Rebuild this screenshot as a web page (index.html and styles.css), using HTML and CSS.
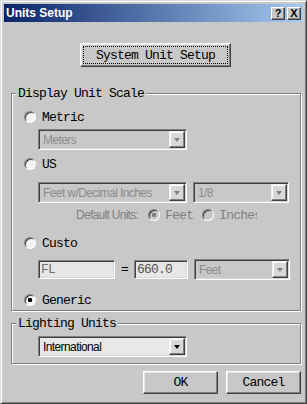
FILE: index.html
```html
<!DOCTYPE html>
<html>
<head>
    <title>Units Setup</title>
    <link rel="stylesheet" href="styles.css">
</head>
<body>
    <!-- dialog window -->
    <div class="window">
        <div class="titlebar">
            <span class="title">Units Setup</span>
            <span class="cap-btn help">?</span>
            <span class="cap-btn close">X</span>
        </div>

        <div class="client">
            <div class="top-row">
                <div class="btn btn-default"><span class="focus">System Unit Setup</span></div>
            </div>

            <!-- display unit scale -->
            <div class="group scale">
                <div class="legend">Display Unit Scale</div>

                <div class="radio-row r-metric"><span class="radio"></span>Metric</div>
                <div class="ctl-row r-meters">
                    <div class="combo disabled w-wide"><span class="combo-text">Meters</span><span class="arrow"></span></div>
                </div>

                <div class="radio-row r-us"><span class="radio"></span>US</div>
                <div class="ctl-row r-feet">
                    <div class="combo disabled w-wide"><span class="combo-text">Feet w/Decimal Inches</span><span class="arrow"></span></div>
                    <div class="combo disabled w-small"><span class="combo-text">1/8</span><span class="arrow"></span></div>
                </div>
                <div class="default-row r-default">
                    <span class="default-label">Default Units:</span>
                    <span class="radio off checked"></span><span class="opt-text feet">Feet</span>
                    <span class="radio off"></span><span class="opt-text inches">Inches</span>
                </div>

                <div class="radio-row r-custo"><span class="radio"></span>Custo</div>
                <div class="ctl-row r-fl">
                    <div class="textbox tb-name">FL</div>
                    <span class="equals">=</span>
                    <div class="textbox tb-value">660.0</div>
                    <div class="combo disabled w-small"><span class="combo-text">Feet</span><span class="arrow"></span></div>
                </div>

                <div class="radio-row r-generic"><span class="radio checked"></span>Generic</div>
            </div>

            <!-- lighting units -->
            <div class="group lighting">
                <div class="legend">Lighting Units</div>
                <div class="ctl-row r-intl">
                    <div class="combo w-wide"><span class="combo-text">International</span><span class="arrow"></span></div>
                </div>
            </div>

            <div class="actions">
                <div class="btn">OK</div>
                <div class="btn">Cancel</div>
            </div>
        </div>
    </div>
</body>
</html>
```

FILE: styles.css
```css
/* dialog base */
* {
    box-sizing: border-box;
}

body {
    margin: 0;
    background: #c8c8c8;
    font-family: "Liberation Mono", monospace;
    font-size: 13px;
    letter-spacing: -0.8px;
    color: #000;
}

.window {
    width: 307px;
    height: 404px;
    padding: 3px;
    border: 1px solid;
    border-color: #dcdcdc #404040 #404040 #dcdcdc;
    box-shadow: inset 1px 1px #fff, inset -1px -1px #808080;
    background: #c8c8c8;
}

/* title bar */
.titlebar {
    height: 18px;
    display: flex;
    align-items: center;
    padding: 0 2px 0 2px;
    background: linear-gradient(to right, #0a246a, #a6caf0);
}

.title {
    flex: 1;
    font-family: "Liberation Sans", sans-serif;
    font-weight: bold;
    font-size: 12px;
    letter-spacing: 0;
    color: #fff;
}

.cap-btn {
    width: 14px;
    height: 13px;
    display: flex;
    justify-content: center;
    align-items: center;
    border: 1px solid;
    border-color: #fff #404040 #404040 #fff;
    box-shadow: inset -1px -1px #808080;
    background: #c8c8c8;
    font-family: "Liberation Sans", sans-serif;
    font-weight: bold;
    font-size: 11px;
    letter-spacing: 0;
    line-height: 1;
}

.cap-btn.close {
    margin-left: 2px;
}

/* buttons */
.btn {
    width: 75px;
    height: 23px;
    display: flex;
    justify-content: center;
    align-items: center;
    border: 1px solid;
    border-color: #fff #404040 #404040 #fff;
    box-shadow: inset -1px -1px #808080, inset 1px 1px #e4e4e4;
}

.client {
    padding-top: 21px;
}

.top-row {
    padding-left: 76px;
}

.btn-default {
    width: 151px;
    height: 24px;
    padding: 3px;
}

.focus {
    flex: 1;
    height: 100%;
    display: flex;
    justify-content: center;
    align-items: center;
    outline: 1px dotted #000;
}

/* group boxes */
.group {
    width: 290px;
    margin-left: 7px;
    border: 1px solid #808080;
    box-shadow: inset 1px 1px #fff, 1px 1px #fff;
}

.scale {
    height: 218px;
    margin-top: 26px;
}

.lighting {
    height: 41px;
    margin-top: 12px;
}

.legend {
    width: fit-content;
    height: 15px;
    line-height: 15px;
    margin: -8px 0 0 4px;
    padding: 0 2px;
    background: #c8c8c8;
}

/* rows */
.radio-row {
    height: 16px;
    display: flex;
    align-items: center;
    padding-left: 12px;
}

.radio-row .radio {
    margin-right: 6px;
}

.ctl-row {
    display: flex;
    align-items: center;
    padding-left: 26px;
}

.r-metric { margin-top: 8px; }
.r-meters { margin-top: 4px; }
.r-us { margin-top: 6px; }
.r-feet { margin-top: 10px; gap: 6px; }
.r-default { margin-top: 4px; }
.r-custo { margin-top: 12px; }
.r-fl { margin-top: 8px; }
.r-generic { margin-top: 12px; }
.r-intl { margin-top: 5px; }

/* radio buttons */
.radio {
    width: 12px;
    height: 12px;
    flex: none;
    border-radius: 50%;
    border: 1px solid;
    border-color: #808080 #fff #fff #808080;
    box-shadow: inset 1px 1px #404040;
    background: #f4f4f4;
}

.radio.checked {
    background: radial-gradient(circle, #000 0 2px, #f4f4f4 2.5px);
}

.radio.off {
    background: #c8c8c8;
}

.radio.off.checked {
    background: radial-gradient(circle, #808080 0 2px, #c8c8c8 2.5px);
}

/* default units line */
.default-row {
    height: 16px;
    display: flex;
    align-items: center;
    padding-left: 64px;
    color: #808080;
}

.default-label {
    font-family: "Liberation Sans", sans-serif;
    font-size: 12px;
    letter-spacing: -0.7px;
    margin-right: 10px;
}

.opt-text {
    margin-left: 5px;
}

.feet {
    width: 37px;
}

.inches {
    width: 38px;
    overflow: hidden;
    white-space: nowrap;
}

/* combo boxes */
.combo {
    height: 21px;
    display: flex;
    align-items: center;
    padding: 1px;
    border: 1px solid;
    border-color: #808080 #fff #fff #808080;
    box-shadow: inset 1px 1px #404040, inset -1px -1px #d8d8d8;
    background: #e8e8e8;
    font-family: "Liberation Sans", sans-serif;
    font-size: 12px;
    letter-spacing: -0.6px;
}

.combo.disabled {
    background: #c8c8c8;
    color: #8c8c8c;
}

.w-wide { width: 149px; }
.w-small { width: 96px; }

.combo-text {
    flex: 1;
    padding-left: 3px;
    white-space: nowrap;
    overflow: hidden;
}

.arrow {
    width: 16px;
    height: 17px;
    display: flex;
    justify-content: center;
    align-items: center;
    border: 1px solid;
    border-color: #f0f0f0 #404040 #404040 #f0f0f0;
    box-shadow: inset -1px -1px #808080, inset 1px 1px #fff;
    background: #d8d8d8;
}

.arrow::after {
    content: "";
    border-left: 3.5px solid transparent;
    border-right: 3.5px solid transparent;
    border-top: 4px solid #000;
}

.disabled .arrow::after {
    border-top-color: #808080;
}

/* text boxes */
.textbox {
    height: 19px;
    display: flex;
    align-items: center;
    padding-left: 2px;
    border: 1px solid;
    border-color: #808080 #fff #fff #808080;
    box-shadow: inset 1px 1px #404040, inset -1px -1px #d8d8d8;
    background: #e6e6e6;
    color: #707070;
}

.tb-name { width: 77px; }
.tb-value { width: 54px; color: #505050; }

.equals {
    width: 19px;
    text-align: center;
}

.r-fl .w-small {
    margin-left: 6px;
}

/* dialog buttons */
.actions {
    display: flex;
    justify-content: flex-end;
    gap: 8px;
    margin-top: 7px;
    padding-right: 2px;
}
```
